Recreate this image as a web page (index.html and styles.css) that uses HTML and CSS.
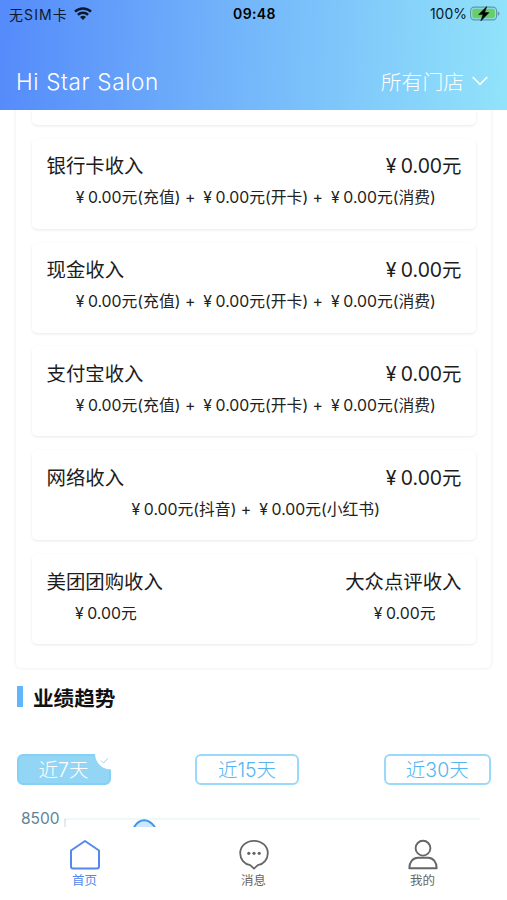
FILE: index.html
```
<!DOCTYPE html>
<html lang="zh-CN">
<head>
    <meta charset="UTF-8">
    <meta name="viewport" content="width=device-width, initial-scale=1.0">
    <title>Hi Star Salon</title>
    <link rel="stylesheet" href="styles.css">
</head>
<body>
    <div class="app">
        <header class="header">
            <div class="status">
                <div class="status_left">
                    <span class="carrier">无SIM卡</span>
                    <svg class="wifi" viewBox="0 0 18 14" width="18" height="14" fill="none" stroke="#0b1a2b" stroke-width="2.5">
                        <path d="M1 4.7A11.4 11.4 0 0 1 17 4.7"/>
                        <path d="M3.9 7.8A7.2 7.2 0 0 1 14.1 7.8"/>
                        <path d="M9 13L6 10.1A4.3 4.3 0 0 1 12 10.1Z" fill="#0b1a2b" stroke="none"/>
                    </svg>
                </div>
                <span class="time">09:48</span>
                <div class="status_right">
                    <span class="percent">100%</span>
                    <svg class="battery" viewBox="0 0 30 16" width="30" height="16">
                        <rect x="0.6" y="1.1" width="26" height="12.8" rx="3.8" fill="none" stroke="#6395a8" stroke-width="1.1"/>
                        <rect x="2.3" y="2.8" width="22.6" height="9.4" rx="2.3" fill="#68ce67"/>
                        <path d="M27.8 5.5V9.7Q29.5 9.3 29.5 7.6T27.8 5.5Z" fill="#6395a8"/>
                        <path d="M16.8 0.5L8.6 8.6H13L10.8 15L19 6.6H14.6Z" fill="#000" stroke="#000" stroke-width="0.5"/>
                    </svg>
                </div>
            </div>
            <div class="title_bar">
                <h1 class="shop">Hi Star Salon</h1>
                <div class="select">
                    <span>所有门店</span>
                    <svg viewBox="0 0 16 10" width="16" height="10" fill="none" stroke="#fff" stroke-width="1.6"><path d="M0.7 1L8 8.3L15.3 1"/></svg>
                </div>
            </div>
        </header>

        <main class="content">
            <section class="panel">
                <div class="card card_cut"></div>
                <div class="card">
                    <div class="card_head"><span>银行卡收入</span><span><i class="yen">¥</i>0.00元</span></div>
                    <p class="detail"><i class="yen">¥</i>0.00元(充值) + <i class="yen">¥</i>0.00元(开卡) + <i class="yen">¥</i>0.00元(消费)</p>
                </div>
                <div class="card">
                    <div class="card_head"><span>现金收入</span><span><i class="yen">¥</i>0.00元</span></div>
                    <p class="detail"><i class="yen">¥</i>0.00元(充值) + <i class="yen">¥</i>0.00元(开卡) + <i class="yen">¥</i>0.00元(消费)</p>
                </div>
                <div class="card">
                    <div class="card_head"><span>支付宝收入</span><span><i class="yen">¥</i>0.00元</span></div>
                    <p class="detail"><i class="yen">¥</i>0.00元(充值) + <i class="yen">¥</i>0.00元(开卡) + <i class="yen">¥</i>0.00元(消费)</p>
                </div>
                <div class="card">
                    <div class="card_head"><span>网络收入</span><span><i class="yen">¥</i>0.00元</span></div>
                    <p class="detail"><i class="yen">¥</i>0.00元(抖音) + <i class="yen">¥</i>0.00元(小红书)</p>
                </div>
                <div class="card">
                    <div class="card_head"><span>美团团购收入</span><span>大众点评收入</span></div>
                    <p class="detail detail_pair"><span><i class="yen">¥</i>0.00元</span><span><i class="yen">¥</i>0.00元</span></p>
                </div>
            </section>

            <h2 class="trend_title">业绩趋势</h2>

            <div class="tabs">
                <div class="tab tab_7 active">近7天
                    <svg class="tick" viewBox="0 0 16 16" width="16" height="16">
                        <path d="M0 0H16V15.5C7 15.5 0.5 9 0 0Z" fill="#fff"/>
                        <path d="M6 6.5L8.5 9L13 4.2" fill="none" stroke="#8bd6f6" stroke-width="1"/>
                    </svg>
                </div>
                <div class="tab tab_15">近15天</div>
                <div class="tab tab_30">近30天</div>
            </div>

            <div class="chart">
                <span class="axis">8500</span>
                <svg viewBox="0 0 420 17" width="420" height="17" fill="none">
                    <path d="M4 9H420" stroke="#e6f8f8" stroke-width="1.3"/>
                    <path d="M5 9V17" stroke="#ccd4d8"/>
                    <path d="M74 17C80 8 88 8 95 17Z" fill="#cfe7fb"/>
                    <path d="M74 17C80 8 88 8 95 17" stroke="#3f95e6" stroke-width="2"/>
                </svg>
            </div>
        </main>

        <nav class="nav">
            <div class="nav_item on">
                <svg viewBox="0 0 32 32" width="32" height="32" fill="none" stroke="currentColor" stroke-width="2" stroke-linejoin="round">
                    <path d="M16 2L30 11.5V27.5Q30 29.5 28 29.5H4Q2 29.5 2 27.5V11.5Z"/>
                </svg>
                <span>首页</span>
            </div>
            <div class="nav_item">
                <svg viewBox="0 0 32 32" width="32" height="32" fill="none" stroke="currentColor" stroke-width="1.8" stroke-linejoin="round">
                    <path d="M16 1.8C8 1.8 2.2 7.3 2.2 14.3C2.2 20.5 6.2 25.2 12.2 26.2L16 29.6L19.8 26.2C25.8 25.2 29.8 20.5 29.8 14.3C29.8 7.3 24 1.8 16 1.8Z"/>
                    <g fill="currentColor" stroke="none"><circle cx="10.8" cy="14.3" r="1.6"/><circle cx="16" cy="14.3" r="1.6"/><circle cx="21.2" cy="14.3" r="1.6"/></g>
                </svg>
                <span>消息</span>
            </div>
            <div class="nav_item">
                <svg viewBox="0 0 32 32" width="32" height="32" fill="none" stroke="currentColor" stroke-width="1.9" stroke-linejoin="round">
                    <circle cx="16" cy="9.2" r="7.4"/>
                    <path d="M2.3 29.3C2.3 23 6 18.7 11 18.7H21C26 18.7 29.7 23 29.7 29.3Z"/>
                </svg>
                <span>我的</span>
            </div>
        </nav>
    </div>
</body>
</html>
```
FILE: styles.css
```
* {
    box-sizing: border-box;
    margin: 0;
    padding: 0;
}
body {
    background-color: #fff;
    color: #222;
    font-family: Inter, "Noto Sans CJK SC", sans-serif;
}
svg {
    display: block;
    flex: none;
}
.app {
    display: flex;
    flex-direction: column;
    height: 900px;
    overflow: hidden;
}

/* header */
.header {
    flex: none;
    height: 109.5px;
    background: linear-gradient(92deg, #558bfa 0%, #75b8fa 50%, #91e3fa 100%);
}
.status {
    display: grid;
    grid-template-columns: 1fr auto 1fr;
    align-items: center;
    height: 27px;
    padding: 0 7px 0 9px;
    color: #0b1a2b;
    font-size: 14px;
}
.status_left, .status_right {
    display: flex;
    align-items: center;
}
.status_left {
    gap: 6px;
}
.status_right {
    justify-content: flex-end;
    gap: 3px;
}
.carrier {
    letter-spacing: 1.1px;
}
.time {
    font-weight: 600;
    color: #000;
    letter-spacing: 0.4px;
}
.title_bar {
    display: flex;
    justify-content: space-between;
    align-items: center;
    height: 54px;
    margin-top: 27px;
    padding: 0 19px 0 16px;
    color: #fff;
}
.shop {
    font-size: 22.5px;
    font-weight: 300;
    letter-spacing: 0.65px;
}
.select {
    display: flex;
    align-items: center;
    gap: 8px;
    font-size: 20.8px;
    font-weight: 300;
}

/* income cards */
.content {
    flex: 1;
    min-height: 0;
    overflow: hidden;
}
.panel {
    margin: 0 16px;
    padding: 0 15.5px 24px 16px;
    border-radius: 0 0 5px 5px;
    box-shadow: 0 0 3px 1px rgba(0,0,0,0.06);
}
.card {
    height: 90px;
    margin-bottom: 13.8px;
    padding: 11.7px 14px 0 14.5px;
    border-radius: 5px;
    box-shadow: 0 1px 3px rgba(0,0,0,0.09);
}
.card:last-child {
    margin-bottom: 0;
}
.card_cut {
    height: 15.5px;
    border-radius: 0 0 5px 5px;
}
.card_head {
    display: flex;
    justify-content: space-between;
    height: 32px;
    line-height: 32px;
    font-size: 19.4px;
    color: #1c1c1c;
}
.detail {
    height: 31px;
    line-height: 31px;
    font-size: 15.8px;
    text-align: center;
    white-space: nowrap;
}
.detail_pair {
    display: flex;
    justify-content: space-between;
    padding: 0 26px 0 25px;
}
/* full-width yen sign */
.yen {
    display: inline-block;
    width: 1em;
    font-style: normal;
    text-align: center;
}

/* trend */
.trend_title {
    display: flex;
    align-items: center;
    gap: 10px;
    height: 30px;
    margin: 14px 0 0 17px;
    font-size: 20.6px;
    font-weight: 700;
    color: #111;
}
.trend_title::before {
    content: "";
    width: 6px;
    height: 21px;
    background-color: #62b5fa;
}
.tabs {
    display: flex;
    justify-content: space-between;
    margin: 42.5px 16px 0 16.5px;
}
.tab {
    position: relative;
    height: 31px;
    border: 2px solid #9ad9fc;
    border-radius: 6px;
    line-height: 28px;
    text-align: center;
    font-size: 19.5px;
    font-weight: 300;
    color: #55b5f3;
}
.tab_7 {
    width: 94px;
}
.tab_15 {
    width: 103.5px;
}
.tab_30 {
    width: 107.5px;
}
.tab.active {
    border-color: #86d0f6;
    background-color: #93d5f5;
    color: #fff;
}
.tick {
    position: absolute;
    top: -2px;
    right: -2px;
}
.chart {
    display: flex;
    align-items: flex-start;
    height: 17px;
    margin: 24.5px 0 0 21px;
}
.axis {
    width: 39px;
    line-height: 17px;
    font-size: 15.5px;
    color: #5e8499;
}

/* bottom nav */
.nav {
    display: flex;
    flex: none;
    height: 73px;
    padding-top: 12px;
    background-color: #fff;
}
.nav_item {
    flex: 1;
    display: flex;
    flex-direction: column;
    align-items: center;
    font-size: 12.5px;
    line-height: 19px;
    color: #666;
}
.nav_item.on {
    color: #5588ee;
}
```
